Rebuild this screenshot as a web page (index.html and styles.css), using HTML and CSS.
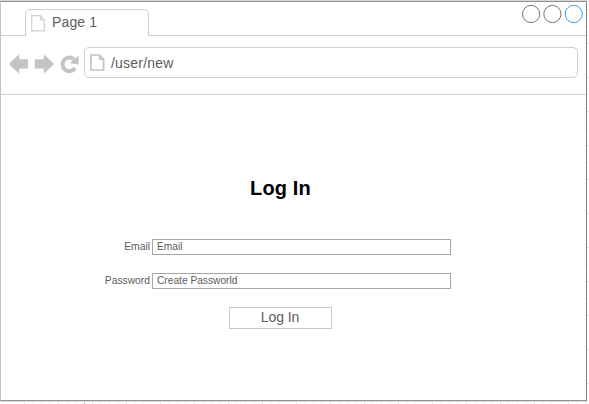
FILE: index.html
```html
<!DOCTYPE html>
<html lang="en">
<head>
<meta charset="utf-8">
<title>Log In</title>
<link rel="stylesheet" href="styles.css">
</head>
<body>
<div class="window">
  <header class="tabbar">
    <div class="tab-lead"></div>
    <div class="tab">
      <svg class="tab-page" width="15" height="17" viewBox="0 0 15 17"><path d="M.7.7H9.5L13.3 4.7V15.8H.7ZM9.5 .7V4.7H13.3"/></svg>
      <span>Page 1</span>
    </div>
    <div class="controls">
      <svg width="64" height="20" viewBox="0 0 64 20"><circle cx="10.1" cy="10" r="8.6"/><circle cx="31.4" cy="10" r="8.6"/><circle class="active" cx="52.7" cy="10" r="8.6"/></svg>
    </div>
  </header>
  <nav class="toolbar">
    <svg class="nav-icons" width="71" height="22" viewBox="0 0 71 22">
      <path d="M0 11 10.3 1V6.3H19V15.6H10.3V21Z"/>
      <path d="M45 11 34.9 1V6.3H25.8V15.6H34.9V21Z"/>
      <path class="reload" d="M66 15.2A6.8 6.8 0 1 1 65 6.4"/>
      <path d="M69.7 2.4V11.4L60.5 10.2Z"/>
    </svg>
    <div class="address">
      <svg class="address-page" width="15" height="17" viewBox="0 0 15 17"><path d="M1 1H9.5L13.6 5.2V16H1ZM9.5 1V5.2H13.6"/></svg>
      <span>/user/new</span>
    </div>
  </nav>
  <main class="content">
    <h1>Log In</h1>
    <form class="form">
      <div class="row"><label>Email</label><div class="field">Email</div></div>
      <div class="row"><label>Password</label><div class="field">Create Passworld</div></div>
      <button class="submit" type="button">Log In</button>
    </form>
  </main>
</div>
</body>
</html>
```
FILE: styles.css
```css
* { box-sizing: border-box; }

body {
  margin: 0;
  padding-top: 1px;
  height: 404px;
  overflow: hidden;
  font-family: "Liberation Sans", Arial, sans-serif;
  color: #5c5c5c;
  background-color: #fff;
  background-image:
    linear-gradient(#bbb, #bbb),
    linear-gradient(90deg, #e2e2e2 1px, transparent 1px),
    linear-gradient(#e2e2e2 1px, transparent 1px),
    linear-gradient(90deg, #f5f5f5 1px, transparent 1px),
    linear-gradient(#f5f5f5 1px, transparent 1px);
  background-size: 1px 404px, 34px 34px, 34px 34px, 8.5px 8.5px, 8.5px 8.5px;
  background-position: 84px 0, 24px 0, 0 9px, 7px 0, 0 .5px;
  background-repeat: no-repeat, repeat, repeat, repeat, repeat;
}

.window {
  display: flex;
  flex-direction: column;
  width: 587px;
  height: 400px;
  background: #fff;
  border: 1px solid #909090;
  border-left-color: #c4c4c4;
  border-right-color: #808080;
  box-shadow: 0 1px #ddd, 0 -1px #d8d8d8;
}

.tabbar {
  display: flex;
  align-items: flex-end;
  height: 34px;
}

.tab-lead {
  width: 24px;
  border-bottom: 1px solid #d0d0d0;
}

.tab {
  display: flex;
  width: 124px;
  height: 27px;
  padding: 5px 0 0 5px;
  border: 1px solid #d0d0d0;
  border-bottom: 0;
  border-radius: 5px 5px 0 0;
  font-size: 14px;
  line-height: 16px;
  letter-spacing: .15px;
}

.tab span { margin: -1px 0 0 6px; }

.tab-page, .address-page {
  flex: none;
  fill: none;
  stroke: #d0d0d0;
  stroke-width: 1.2;
}

.controls {
  flex: 1;
  height: 34px;
  padding: 2px 0 0 372px;
  border-bottom: 1px solid #d0d0d0;
}

.controls svg {
  display: block;
  fill: none;
  stroke: #777;
  stroke-width: 1;
}

.controls .active { stroke: #2f9ff5; }

.toolbar {
  display: flex;
  height: 59px;
  padding: 11px 8px 0 8px;
  border-bottom: 1px solid #d2d2d2;
}

.nav-icons {
  flex: none;
  margin: 6px 4px 0 0;
  fill: #c4c4c4;
}

.nav-icons .reload {
  fill: none;
  stroke: #c4c4c4;
  stroke-width: 4;
}

.address {
  display: flex;
  flex: 1;
  align-items: center;
  height: 31px;
  padding-left: 5px;
  border: 1px solid #cfcfcf;
  border-radius: 5px;
  font-size: 14px;
  letter-spacing: .22px;
}

.address-page { stroke: #c4c4c4; stroke-width: 1.7; }
.address span { margin-left: 6px; }

.content { flex: 1; }

h1 {
  width: 125px;
  margin: 81px 0 0 217px;
  font-size: 20px;
  line-height: 24px;
  letter-spacing: .15px;
  text-align: center;
  color: #000;
}

.form { margin: 39px 0 0; }

.row {
  display: flex;
  gap: 2px;
  height: 16px;
  margin-bottom: 18px;
}

label {
  width: 149px;
  font-size: 10.3px;
  line-height: 15px;
  text-align: right;
}

.field {
  width: 299px;
  padding-left: 4px;
  border: 1px solid #a6a6a6;
  font-size: 10.2px;
  line-height: 13px;
}

.submit {
  display: block;
  width: 103px;
  height: 22px;
  margin-left: 228px;
  padding: 0 1px 1px 0;
  border: 1px solid #c8c8c8;
  background: #fff;
  color: #5c5c5c;
  font-family: inherit;
  font-size: 14px;
  line-height: 19px;
  letter-spacing: -.1px;
}
```
